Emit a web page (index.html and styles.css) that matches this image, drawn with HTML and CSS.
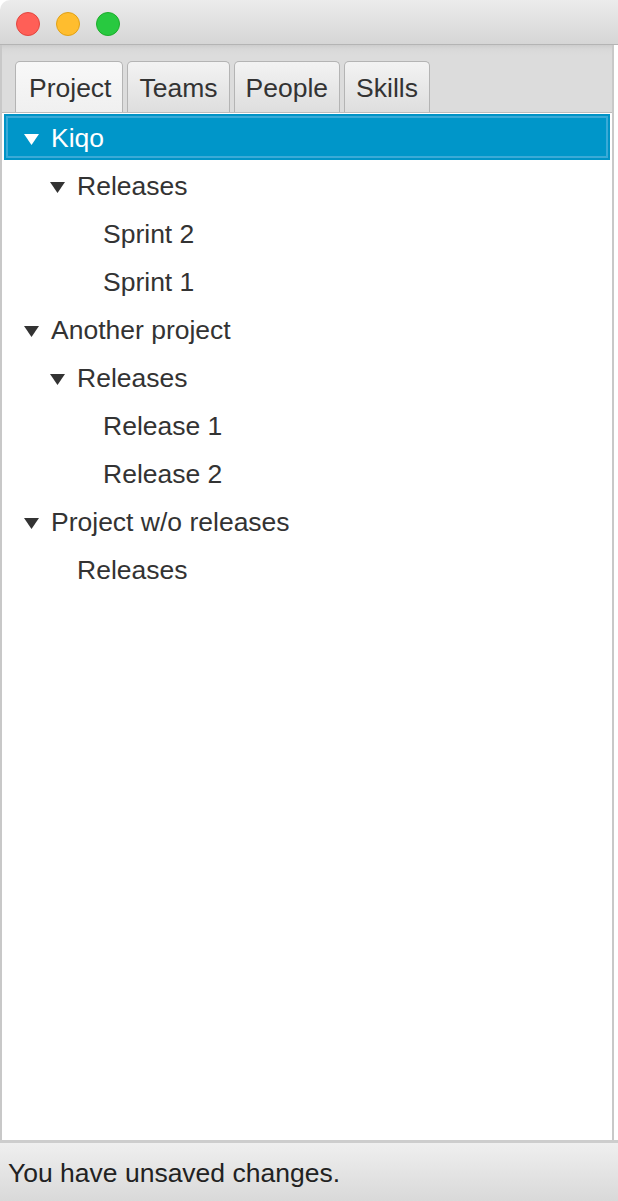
FILE: index.html
```html
<!DOCTYPE html>
<html>
<head>
<meta charset="utf-8">
<link rel="stylesheet" href="styles.css">
</head>
<body>
<div class="window">
  <div class="titlebar">
    <span class="light red"></span>
    <span class="light yellow"></span>
    <span class="light green"></span>
  </div>
  <div class="tabpane">
    <div class="tabheader">
      <div class="tab selected">Project</div>
      <div class="tab">Teams</div>
      <div class="tab">People</div>
      <div class="tab">Skills</div>
    </div>
    <div class="tree">
      <div class="row selected lvl0"><span class="disc"><svg width="15" height="11" viewBox="0 0 15 11"><polygon points="0,0 15,0 7.5,11"/></svg></span><span class="label">Kiqo</span></div>
      <div class="row lvl1"><span class="disc"><svg width="15" height="11" viewBox="0 0 15 11"><polygon points="0,0 15,0 7.5,11"/></svg></span><span class="label">Releases</span></div>
      <div class="row lvl2"><span class="disc"></span><span class="label">Sprint 2</span></div>
      <div class="row lvl2"><span class="disc"></span><span class="label">Sprint 1</span></div>
      <div class="row lvl0"><span class="disc"><svg width="15" height="11" viewBox="0 0 15 11"><polygon points="0,0 15,0 7.5,11"/></svg></span><span class="label">Another project</span></div>
      <div class="row lvl1"><span class="disc"><svg width="15" height="11" viewBox="0 0 15 11"><polygon points="0,0 15,0 7.5,11"/></svg></span><span class="label">Releases</span></div>
      <div class="row lvl2"><span class="disc"></span><span class="label">Release 1</span></div>
      <div class="row lvl2"><span class="disc"></span><span class="label">Release 2</span></div>
      <div class="row lvl0"><span class="disc"><svg width="15" height="11" viewBox="0 0 15 11"><polygon points="0,0 15,0 7.5,11"/></svg></span><span class="label">Project w/o releases</span></div>
      <div class="row lvl1"><span class="disc"></span><span class="label">Releases</span></div>
    </div>
  </div>
  <div class="statusbar">You have unsaved changes.</div>
</div>
</body>
</html>
```

FILE: styles.css
```css
html, body {
  margin: 0;
  padding: 0;
  background: #ffffff;
}
body {
  width: 618px;
  height: 1201px;
  overflow: hidden;
  font-family: "Liberation Sans", Arial, sans-serif;
  color: #333333;
}
.window {
  display: flex;
  flex-direction: column;
  height: 1201px;
}
.titlebar {
  height: 44px;
  border-bottom: 1px solid #b4b4b4;
  border-top-left-radius: 10px;
  background: linear-gradient(#ececec, #d6d6d6);
  display: flex;
  align-items: flex-start;
  gap: 16px;
  padding-left: 16px;
  box-sizing: content-box;
}
.light {
  width: 24px;
  height: 24px;
  margin-top: 12px;
  border-radius: 50%;
  box-sizing: border-box;
}
.red { background: #ff5f57; border: 1px solid #e2463f; }
.yellow { background: #ffbd2e; border: 1px solid #e1a116; }
.green { background: #28c940; border: 1px solid #1dad2b; }

.tabpane {
  flex: 1;
  width: 614px;
  box-sizing: border-box;
  border-left: 2px solid #c8c8c8;
  border-right: 2px solid #c8c8c8;
  display: flex;
  flex-direction: column;
  min-height: 0;
}
.tabheader {
  height: 67px;
  border-bottom: 1px solid #bcbcbc;
  background: linear-gradient(#cdcdcd 0px, #d8d8d8 4px, #dcdcdc 10px, #dcdcdc);
  display: flex;
  align-items: flex-end;
  gap: 4px;
  padding-left: 13px;
}
.tab {
  height: 51px;
  box-sizing: border-box;
  border: 1px solid #b4b4b4;
  border-bottom: none;
  border-radius: 5px 5px 0 0;
  background: linear-gradient(#f3f3f3, #dedede);
  padding: 3px 11px 0 11px;
  font-size: 26.5px;
  line-height: 47px;
  color: #333333;
}
.tab.selected {
  background: linear-gradient(#f8f8f8, #f0f0f0);
  padding-left: 13px;
}
.tree {
  flex: 1;
  background: #ffffff;
  display: flex;
  flex-direction: column;
  padding-left: 1px;
}
.row {
  height: 48px;
  display: flex;
  align-items: center;
  font-size: 26.5px;
  color: #333333;
  box-sizing: border-box;
  padding-top: 3px;
}
.row.selected {
  background: #0096c9;
  color: #ffffff;
  margin-right: 1px;
  box-shadow: inset 0 0 0 1px #ffffff, inset 0 0 0 3px #0093c6, inset 0 0 0 5px #3aaad7;
}
.lvl0 { padding-left: 21px; }
.lvl1 { padding-left: 47px; }
.lvl2 { padding-left: 73px; }
.disc {
  width: 27px;
  flex: none;
  display: flex;
  align-items: center;
  padding-top: 2px;
}
.disc svg { fill: #333333; display: block; }
.row.selected .disc svg { fill: #ffffff; }
.label {
  white-space: nowrap;
}
.statusbar {
  border-top: 3px solid #cdcdcd;
  background: linear-gradient(#efefef, #d9d9d9);
  padding-left: 8px;
  padding-top: 3px;
  box-sizing: border-box;
  height: 61px;
  font-size: 26.5px;
  line-height: 54px;
  color: #222222;
}
```
